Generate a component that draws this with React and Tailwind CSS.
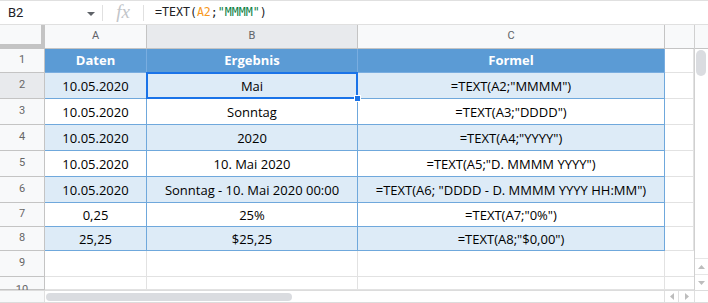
import React from 'react';

const rows = [
  { n: 2, h: 'h-[26px]', a: '10.05.2020', b: 'Mai', c: '=TEXT(A2;"MMMM")', alt: true, sel: true },
  { n: 3, h: 'h-[26px]', a: '10.05.2020', b: 'Sonntag', c: '=TEXT(A3;"DDDD")' },
  { n: 4, h: 'h-[26px]', a: '10.05.2020', b: '2020', c: '=TEXT(A4;"YYYY")', alt: true },
  { n: 5, h: 'h-[26px]', a: '10.05.2020', b: '10. Mai 2020', c: '=TEXT(A5;"D. MMMM YYYY")' },
  { n: 6, h: 'h-[26px]', a: '10.05.2020', b: 'Sonntag - 10. Mai 2020 00:00', c: '=TEXT(A6; "DDDD - D. MMMM YYYY HH:MM")', alt: true },
  { n: 7, h: 'h-[24px]', a: '0,25', b: '25%', c: '=TEXT(A7;"0%")' },
  { n: 8, h: 'h-[24px]', a: '25,25', b: '$25,25', c: '=TEXT(A8;"$0,00")', alt: true },
];

const cellFont = { fontFamily: '"Open Sans", "Liberation Sans", sans-serif' };

function RowHead({ n, active }) {
  return (
    <div
      className={`w-[45px] shrink-0 border-r border-b border-[#c4c4c4] flex items-center justify-center text-[11px] text-[#666] font-['Roboto',sans-serif] ${
        active ? 'bg-[#e8eaed]' : 'bg-[#f8f9fa]'
      }`}
    >
      {n}
    </div>
  );
}

function Cell({ w, bg, children, extra = '' }) {
  return (
    <div
      className={`${w} shrink-0 relative border-r border-b border-[#6fa8dc] ${bg} flex items-center justify-center pt-[2px] text-[13px] text-black whitespace-nowrap ${extra}`}
      style={cellFont}
    >
      {children}
    </div>
  );
}

function Blank({ w }) {
  return <div className={`${w} shrink-0 border-r border-b border-[#e2e2e2] bg-white`} />;
}

export default function App() {
  return (
    <div className="w-[708px] h-[303px] overflow-hidden bg-white flex flex-col font-['Roboto',sans-serif]">
      {/* formula bar */}
      <div className="h-[25px] shrink-0 flex items-center border-t border-b border-[#e0e0e0] bg-white">
        <div className="w-[102px] pl-[8px] flex items-center justify-between pr-[7px]">
          <span className="text-[13px] text-[#202124]">B2</span>
          <svg width="8" height="4" viewBox="0 0 8 4" className="mt-[2px]">
            <path d="M0 0h8L4 4z" fill="#5f6368" />
          </svg>
        </div>
        <div className="w-px h-[16px] bg-[#e0e0e0]" />
        <div className="w-[40px] flex items-center justify-center">
          <span className="italic text-[19px] leading-none text-[#c2c5c9] font-['Liberation_Serif',serif] -mt-[2px]">fx</span>
        </div>
        <div className="w-px h-[16px] bg-[#e0e0e0]" />
        <div className="pl-[11px] text-[11.6px] text-[#202124] font-['DejaVu_Sans_Mono',monospace] whitespace-pre">
          =TEXT(<span className="text-[#f7981d]">A2</span>;<span className="text-[#0b8043]">"MMMM"</span>)
        </div>
      </div>

      <div className="flex flex-1">
        {/* grid */}
        <div className="flex flex-col w-[694px]">
          {/* column headers */}
          <div className="flex h-[24px] shrink-0 text-[11px] text-[#5f6368]">
            <div className="w-[45px] shrink-0 bg-[#f8f9fa] border-r-[4px] border-b-[5px] border-[#c4c4c4]" />
            <div className="w-[102px] shrink-0 bg-[#f8f9fa] border-r border-b border-[#c4c4c4] flex items-center justify-center">A</div>
            <div className="w-[211px] shrink-0 bg-[#e8eaed] border-r border-b border-[#c4c4c4] flex items-center justify-center">B</div>
            <div className="w-[307px] shrink-0 bg-[#f8f9fa] border-r border-b border-[#c4c4c4] flex items-center justify-center">C</div>
            <div className="w-[29px] shrink-0 bg-[#f8f9fa] border-b border-[#c4c4c4]" />
          </div>

          {/* table header row */}
          <div className="flex h-[24px] shrink-0">
            <RowHead n={1} />
            {['Daten', 'Ergebnis', 'Formel'].map((t, i) => (
              <div
                key={t}
                className={`${['w-[102px]', 'w-[211px]', 'w-[307px]'][i]} shrink-0 bg-[#5b9bd5] border-r border-b border-[#79ade0] flex items-center justify-center text-[13px] font-bold text-white`}
                style={cellFont}
              >
                {t}
              </div>
            ))}
            <Blank w="w-[29px]" />
          </div>

          {rows.map((r) => {
            const bg = r.alt ? 'bg-[#ddebf7]' : 'bg-white';
            return (
              <div key={r.n} className={`flex ${r.h} shrink-0`}>
                <RowHead n={r.n} active={r.sel} />
                <Cell w="w-[102px]" bg={bg}>{r.a}</Cell>
                <Cell w="w-[211px]" bg={bg} extra={r.sel ? 'z-10' : ''}>
                  {r.b}
                  {r.sel && (
                    <>
                      <div className="absolute -top-px -left-px -right-px -bottom-px border-2 border-[#1a73e8] pointer-events-none" />
                      <div className="absolute -right-[4px] -bottom-[4px] w-[7px] h-[7px] bg-[#1a73e8] border border-white" />
                    </>
                  )}
                </Cell>
                <Cell w="w-[307px]" bg={bg}>{r.c}</Cell>
                <Blank w="w-[29px]" />
              </div>
            );
          })}

          {[9, 10].map((n) => (
            <div key={n} className={`flex ${n === 9 ? 'h-[26px]' : 'h-[13px]'} shrink-0 overflow-hidden`}>
              <div className="w-[45px] shrink-0 border-r border-b border-[#c4c4c4] bg-[#f8f9fa] flex justify-center text-[11px] text-[#666]">
                <span className={n === 9 ? 'self-center' : 'pt-[5px]'}>{n}</span>
              </div>
              <Blank w="w-[102px]" />
              <Blank w="w-[211px]" />
              <Blank w="w-[307px]" />
              <div className="w-[29px] shrink-0 border-b border-[#e2e2e2]" />
            </div>
          ))}
        </div>

        {/* vertical scrollbar */}
        <div className="w-[14px] flex flex-col border-l border-[#d0d0d0] bg-white">
          <div className="h-[24px] shrink-0 bg-[#f8f9fa] border-b border-[#c4c4c4]" />
          <div className="flex-1 relative">
            <div className="absolute left-[1px] top-[1px] w-[10px] h-[26px] rounded-full bg-[#dadce0]" />
          </div>
          <div className="h-[16px] border-t border-[#e6e6e6] flex items-center justify-center">
            <svg width="7" height="4" viewBox="0 0 7 4"><path d="M0 4h7L3.5 0z" fill="#bdbdbd" /></svg>
          </div>
          <div className="h-[16px] border-t border-[#e6e6e6] flex items-center justify-center">
            <svg width="7" height="4" viewBox="0 0 7 4"><path d="M0 0h7L3.5 4z" fill="#bdbdbd" /></svg>
          </div>
        </div>
      </div>

      {/* horizontal scrollbar */}
      <div className="h-[13px] shrink-0 flex border-t border-b border-[#dcdcdc] bg-white">
        <div className="w-[45px] shrink-0 bg-[#f8f9fa] border-r border-[#e0e0e0]" />
        <div className="w-[619px] shrink-0 flex items-center pl-[1px]">
          <div className="w-[246px] h-[8px] rounded-full bg-[#dadce0]" />
        </div>
        <div className="w-[14px] shrink-0 border-l border-[#e0e0e0] flex items-center justify-center">
          <svg width="4" height="7" viewBox="0 0 4 7"><path d="M4 0v7L0 3.5z" fill="#bdbdbd" /></svg>
        </div>
        <div className="w-[16px] shrink-0 border-l border-[#e0e0e0] flex items-center justify-center">
          <svg width="4" height="7" viewBox="0 0 4 7"><path d="M0 0v7L4 3.5z" fill="#bdbdbd" /></svg>
        </div>
        <div className="flex-1 border-l border-[#e0e0e0]" />
      </div>
    </div>
  );
}
